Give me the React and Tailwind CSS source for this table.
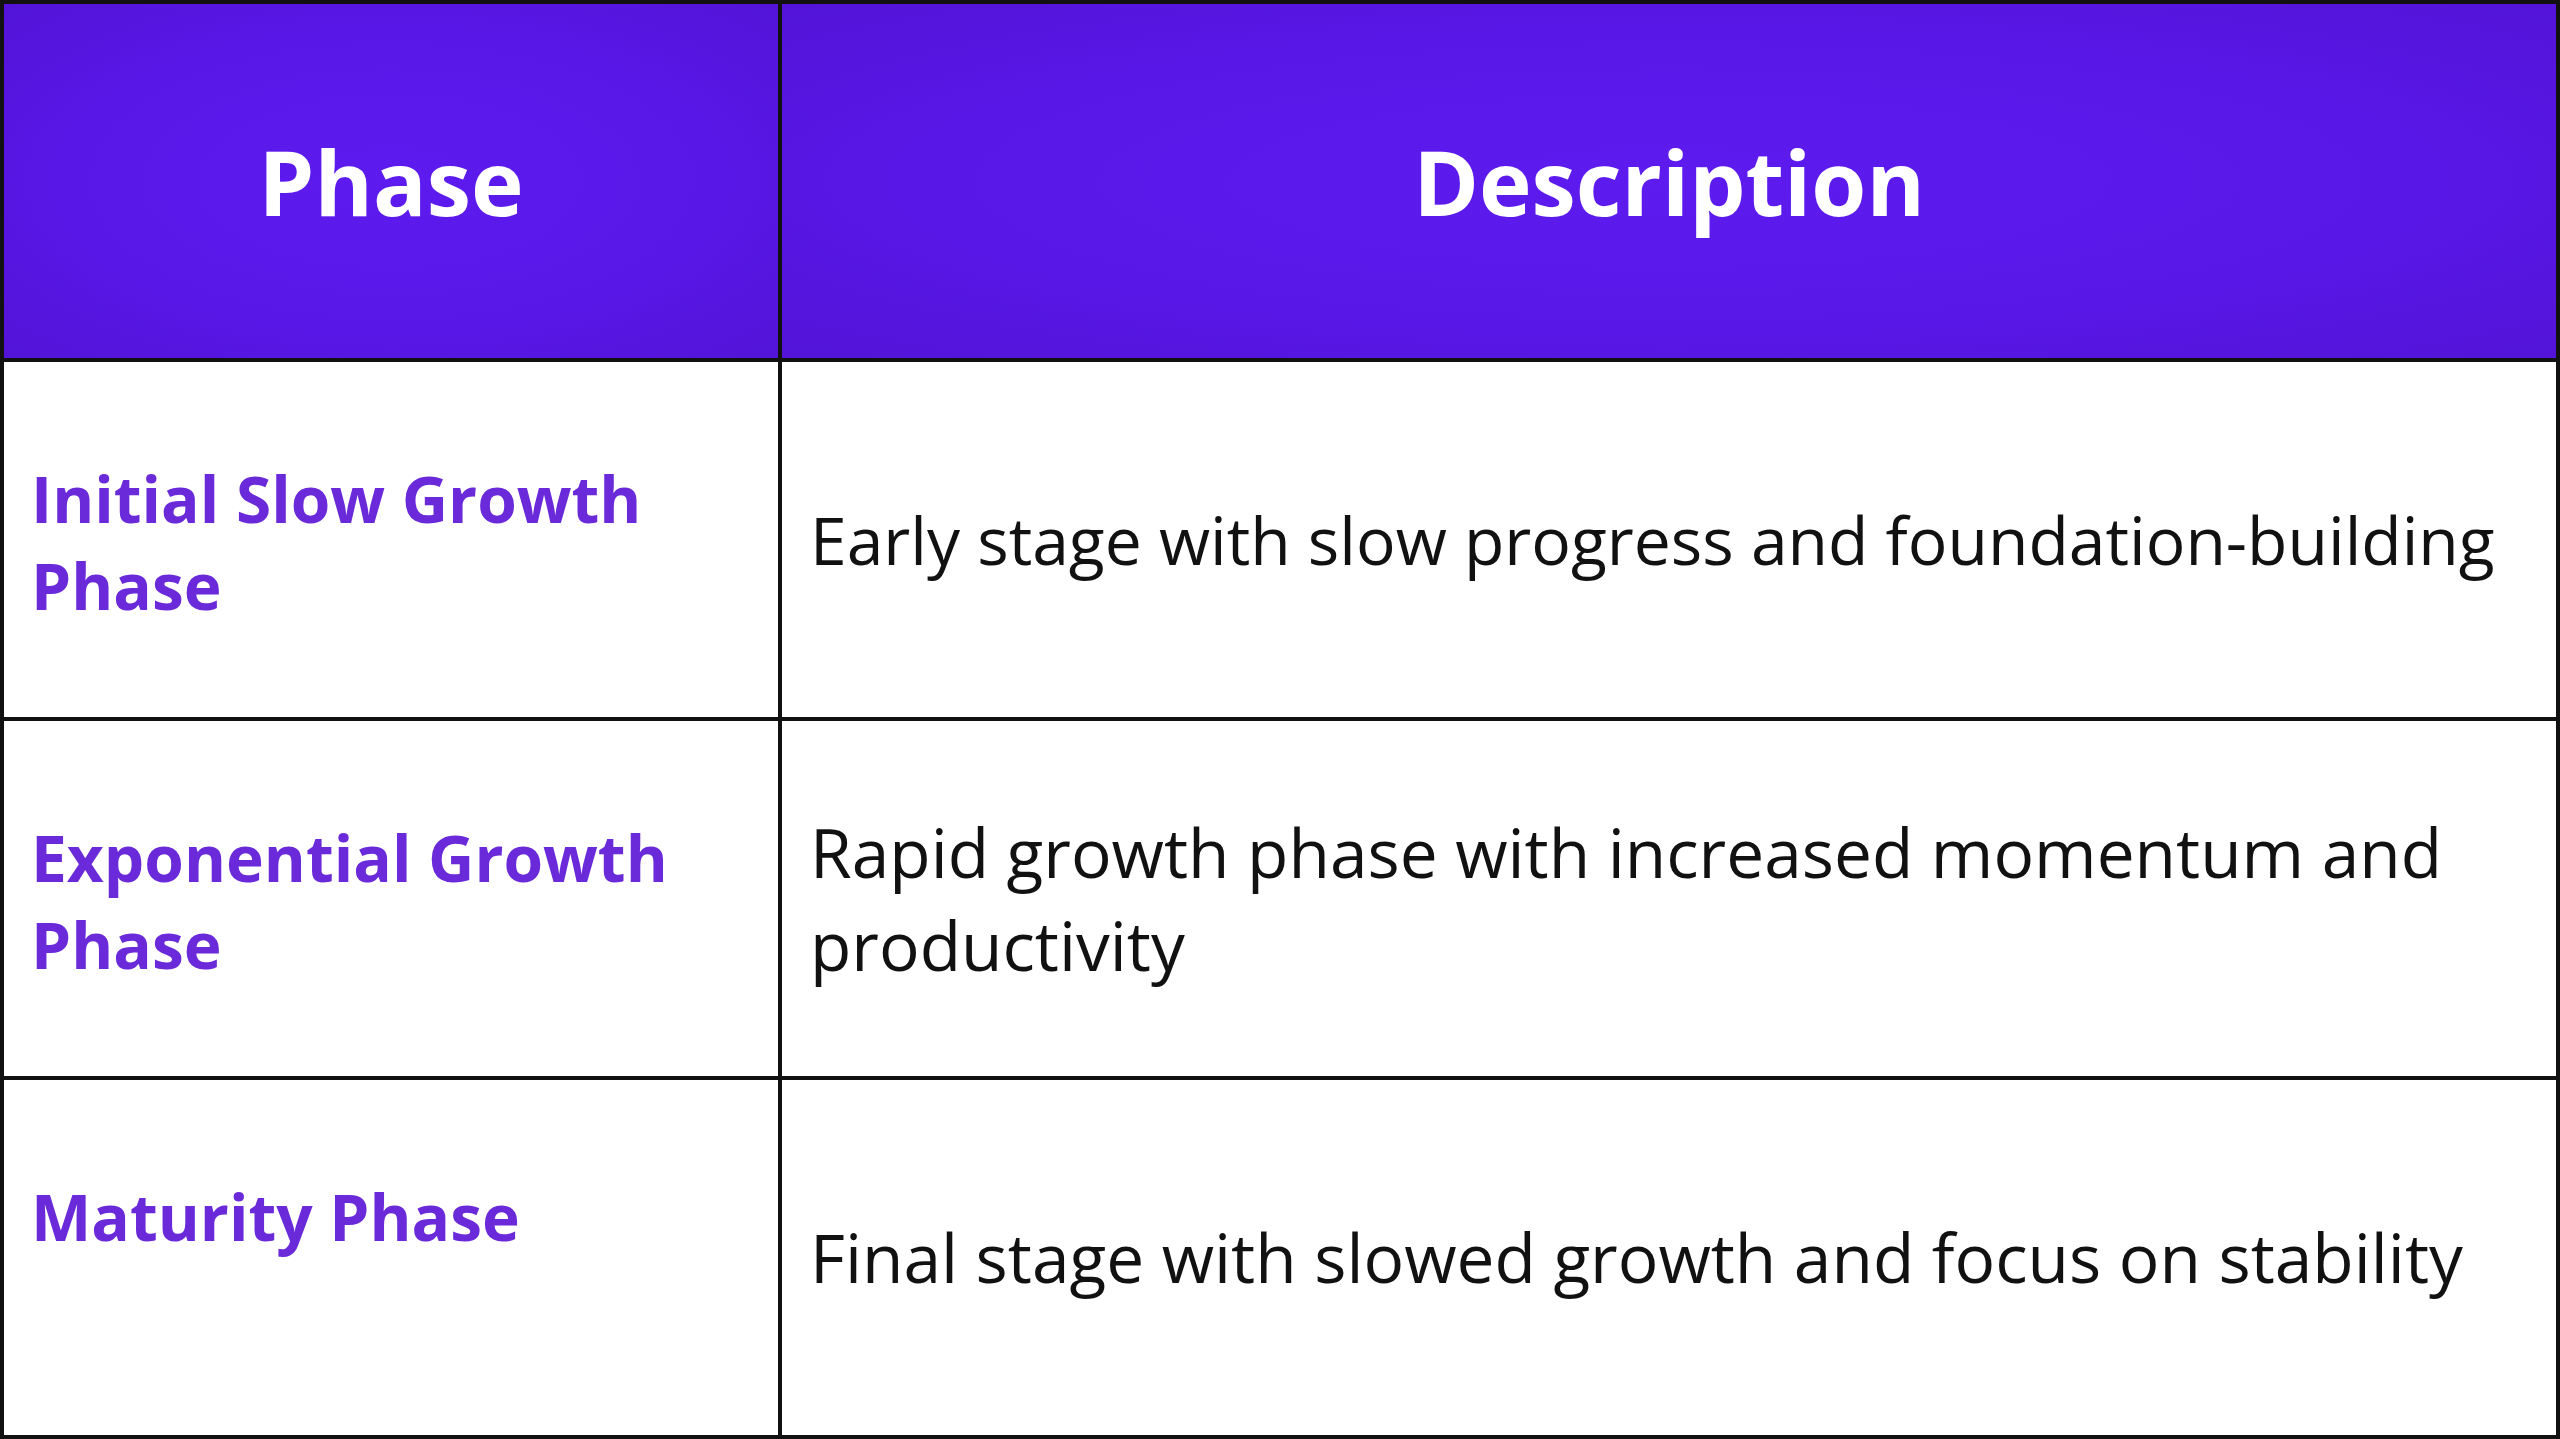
import React from "react";

const rows = [
  {
    phase: "Initial Slow Growth Phase",
    description: "Early stage with slow progress and foundation-building",
    size: "text-[66px]",
  },
  {
    phase: "Exponential Growth Phase",
    description: "Rapid growth phase with increased momentum and productivity",
    size: "text-[67.6px]",
  },
  {
    phase: "Maturity Phase",
    description: "Final stage with slowed growth and focus on stability",
    size: "text-[67.6px]",
  },
];

function HeaderCell({ children }) {
  return (
    <div className="flex items-center justify-center border-r-4 border-b-4 border-[#111] bg-[radial-gradient(ellipse_at_center,#5d1bef_0%,#5817e6_60%,#5314d8_100%)]">
      <span className="text-[89px] font-bold leading-none text-white">
        {children}
      </span>
    </div>
  );
}

function App() {
  return (
    <div className="h-[1439px] w-[2560px] overflow-hidden bg-white font-['Open_Sans',sans-serif]">
      <div className="grid h-full grid-cols-[778px_1fr] grid-rows-[358px_359px_359px_359px] border-l-4 border-t-4 border-[#111]">
        <HeaderCell>Phase</HeaderCell>
        <HeaderCell>Description</HeaderCell>

        {rows.map((row) => (
          <React.Fragment key={row.phase}>
            <div className="border-r-4 border-b-4 border-[#111] pl-[27px] pr-[20px] pt-[93px]">
              <p className="text-[64px] font-bold leading-[87px] text-[#6a2ad9]">
                {row.phase}
              </p>
            </div>
            <div className="flex items-center border-r-4 border-b-4 border-[#111] pl-[28px] pr-[40px]">
              <p className={`${row.size} leading-[93px] text-[#111]`}>
                {row.description}
              </p>
            </div>
          </React.Fragment>
        ))}
      </div>
    </div>
  );
}

export default App;
